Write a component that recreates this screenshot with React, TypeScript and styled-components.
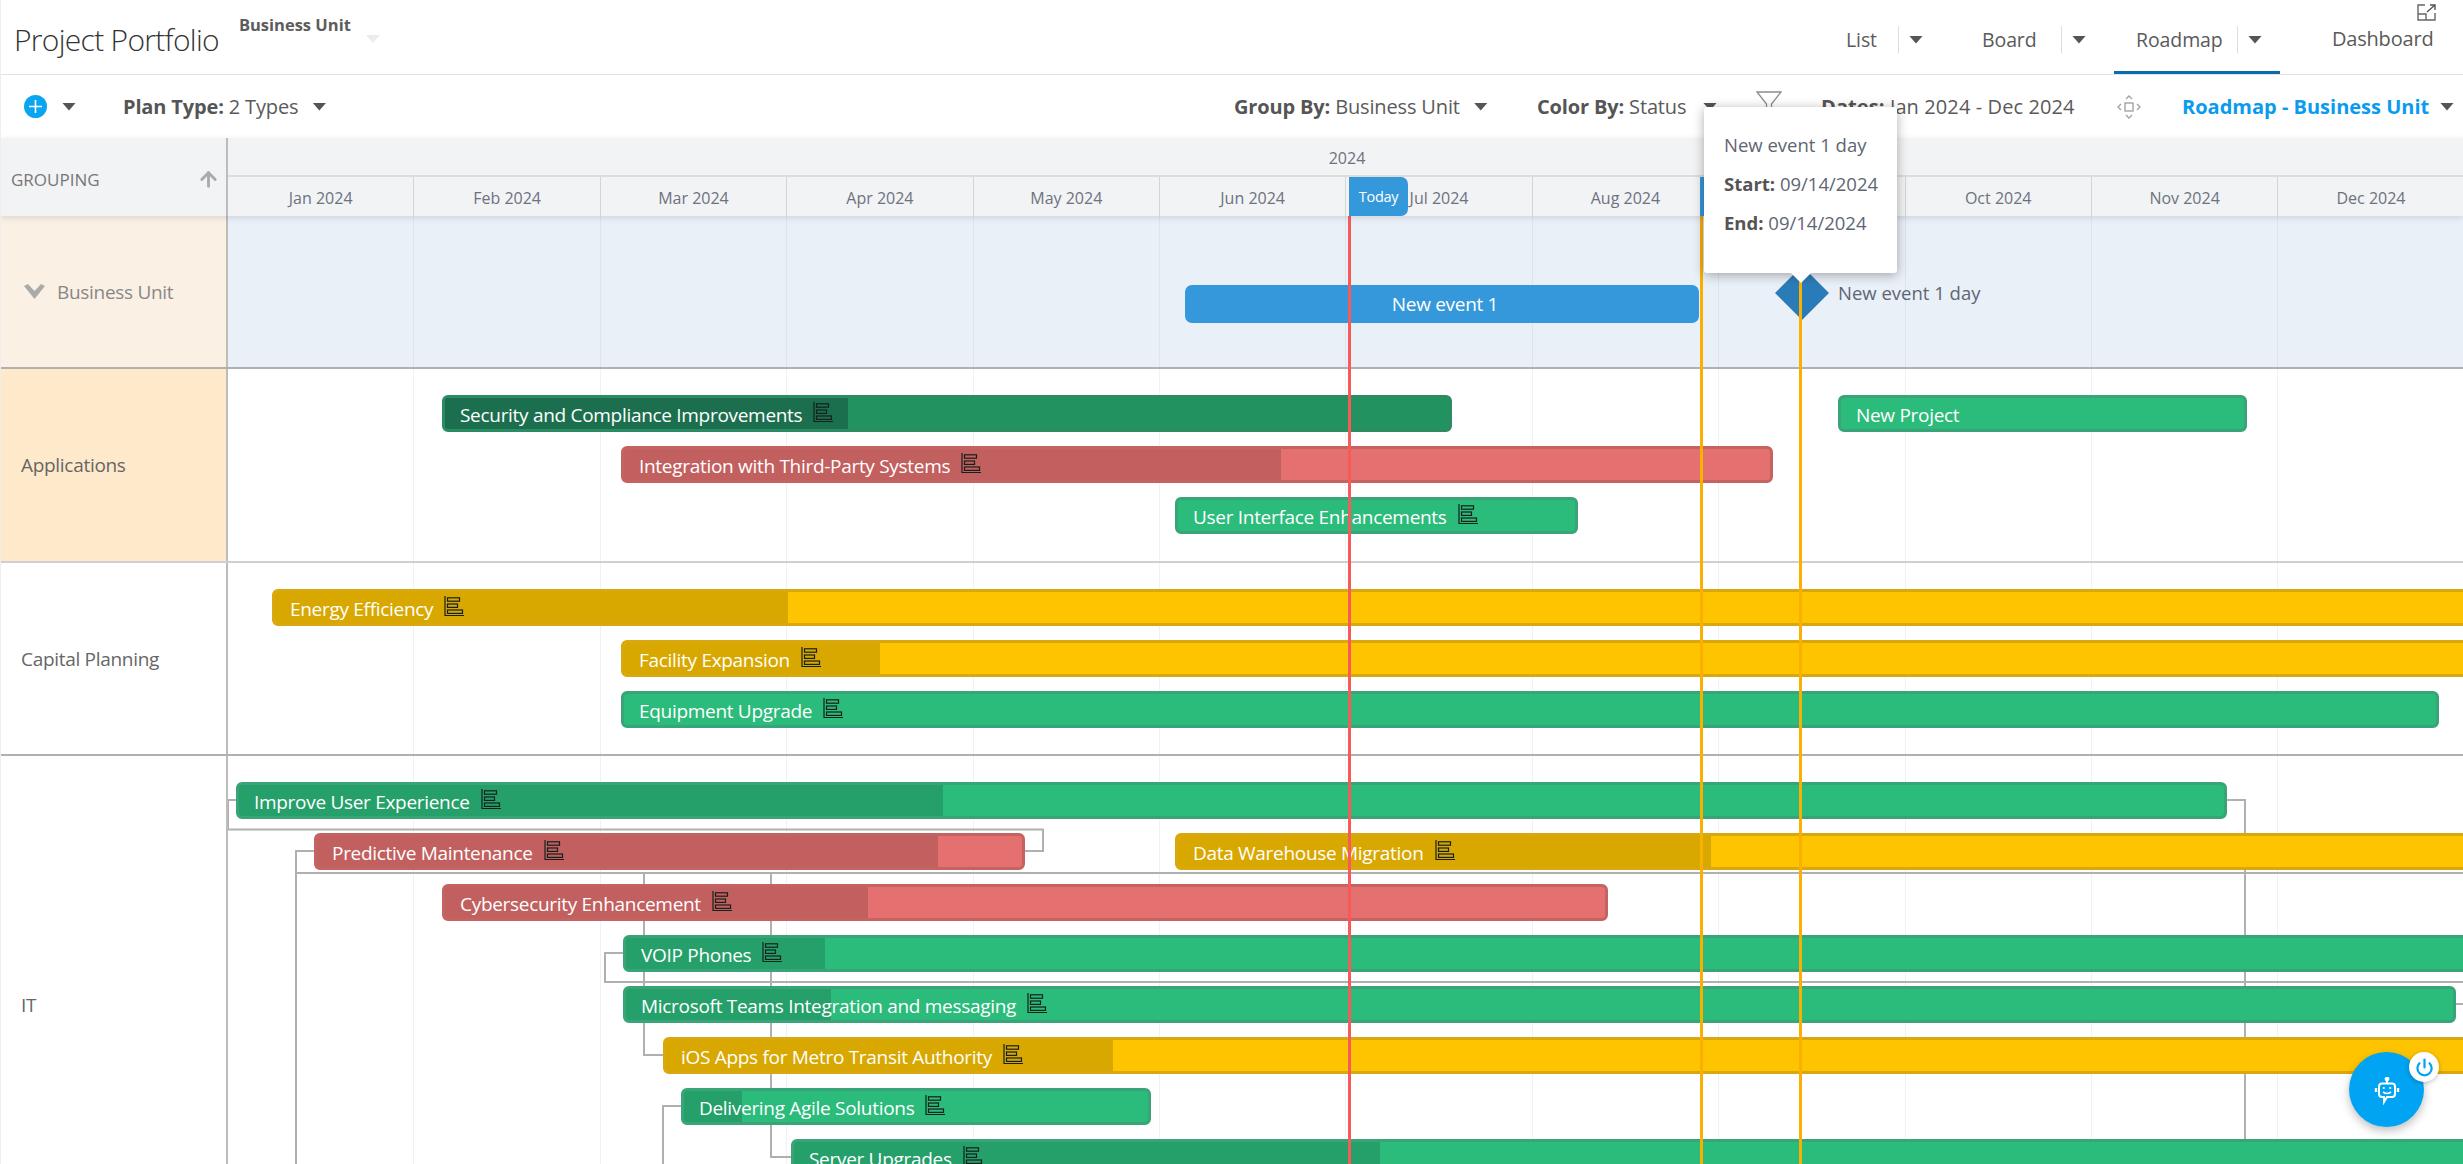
import React from "react";
import styled, { createGlobalStyle } from "styled-components";
import { ArrowUp, Power } from "lucide-react";

const GlobalStyle = createGlobalStyle`
  html, body { margin: 0; padding: 0; background: #fff; }
  body { font-family: "Open Sans", "Noto Sans", sans-serif; color: #555; letter-spacing: -0.3px; }
  * { box-sizing: border-box; }
`;

const ORIGIN = 228;
const MONTH_W = 186.4;

const Page = styled.div`
  position: relative;
  width: 2463px;
  height: 1164px;
  overflow: hidden;
  border-left: 1px solid #eee;
  display: flex;
  flex-direction: column;
`;

/* top bar */
const TopBar = styled.header`
  position: relative;
  flex: none;
  height: 75px;
  padding-right: 31px;
  border-bottom: 1px solid #e2e2e2;
  display: flex;
  align-items: stretch;
`;
const Title = styled.h1`
  margin: 20px 0 0 13px;
  font-size: 30px;
  line-height: 40px;
  font-weight: 300;
  color: #333;
  letter-spacing: -0.7px;
`;
const UnitPicker = styled.div`
  margin: 13px 0 0 20px;
  width: 140px;
  height: 36px;
  position: relative;
  font-size: 16.5px;
  line-height: 23px;
  font-weight: 700;
  color: #5c5c5c;
  letter-spacing: 0;
`;
const FaintCaret = styled.span`
  position: absolute;
  left: 127px;
  top: 22px;
  width: 14px;
  height: 8px;
  background: #ececec;
  clip-path: polygon(0 0, 100% 0, 50% 100%);
`;
const Tabs = styled.nav`
  margin-left: auto;
  display: flex;
  align-items: stretch;
`;
const Tab = styled.div<{ $ml: number; $active?: boolean }>`
  margin-left: ${(p) => p.$ml}px;
  padding: 8px 18px 0 22px;
  display: flex;
  align-items: center;
  border-bottom: 3px solid ${(p) => (p.$active ? "#0a6aab" : "transparent")};
`;
const TabLabel = styled.span<{ $w: number }>`
  width: ${(p) => p.$w}px;
  font-size: 19.5px;
  color: #5a5a5a;
  letter-spacing: -0.1px;
`;
const TabDivider = styled.span`
  width: 1px;
  height: 27px;
  background: #ddd;
  margin-right: 10px;
`;
const Caret = styled.span`
  display: inline-block;
  flex: none;
  width: 14px;
  height: 8px;
  background: #555;
  clip-path: polygon(0 0, 100% 0, 50% 100%);
`;
const PlainTab = styled.div`
  margin-left: 52px;
  width: 100px;
  font-size: 20px;
  letter-spacing: -0.2px;
  color: #5a5a5a;
  align-self: center;
  padding-top: 2px;
`;
const ExpandIcon = styled.svg`
  position: absolute;
  right: 27px;
  top: 4px;
  width: 19px;
  height: 17px;
`;

/* toolbar */
const Toolbar = styled.div`
  flex: none;
  height: 63px;
  display: flex;
  align-items: center;
  font-size: 20px;
  letter-spacing: -0.15px;
  color: #5a5a5a;
  white-space: nowrap;
`;
const PlusButton = styled.span`
  margin-left: 23px;
  width: 23px;
  height: 23px;
  border-radius: 50%;
  background: #0aa5f0;
  display: flex;
  align-items: center;
  justify-content: center;
`;
const PlusCaret = styled(Caret)`
  margin-left: 15px;
  margin-right: 47px;
`;
const ToolItem = styled.div<{ $w: number }>`
  width: ${(p) => p.$w}px;
  display: flex;
  align-items: center;
`;
const ToolCaret = styled(Caret)`
  margin-left: 14px;
`;
const ToolText = styled.span<{ $w?: number; $wide?: boolean }>`
  ${(p) => (p.$w ? `width: ${p.$w}px;` : "")}
  ${(p) => (p.$wide ? "letter-spacing: 0.1px;" : "")}
  b { font-weight: 700; color: #555; }
`;
const Spacer = styled.div`
  flex: 1;
`;
const ViewName = styled.span`
  width: 244px;
  font-weight: 700;
  color: #0a9bef;
  letter-spacing: 0;
`;
const FilterIcon = styled.svg`
  width: 26px;
  height: 26px;
  margin-top: -6px;
`;
const MoveIcon = styled.svg`
  width: 26px;
  height: 26px;
`;

/* timeline header */
const TimelineHead = styled.div`
  position: relative;
  z-index: 3;
  flex: none;
  height: 78px;
  display: flex;
  background: #f2f3f5;
  box-shadow: 0 2px 6px rgba(60, 70, 90, 0.16);
`;
const GroupCell = styled.div`
  flex: none;
  width: 227px;
  padding: 4px 6px 0 10px;
  border-right: 2px solid #bcbcbc;
  display: flex;
  align-items: center;
  justify-content: space-between;
  font-size: 17px;
  letter-spacing: 0;
  color: #777;
`;
const ScaleColumn = styled.div`
  flex: 1;
  min-width: 0;
  display: flex;
  flex-direction: column;
`;
const YearLabel = styled.div`
  height: 39px;
  border-bottom: 2px solid #dcdcdc;
  font-size: 16px;
  letter-spacing: 0;
  line-height: 40px;
  text-align: center;
  color: #6c7280;
  padding-left: 3px;
`;
const MonthRow = styled.div`
  flex: 1;
  display: flex;
`;
const MonthCell = styled.div`
  flex: none;
  width: ${MONTH_W}px;
  border-right: 1px solid #d5d5d5;
  font-size: 16px;
  letter-spacing: 0;
  line-height: 42px;
  text-align: center;
  color: #6c7280;
`;
const DateBadge = styled.div<{ $x: number; $w: number }>`
  position: absolute;
  left: ${(p) => p.$x - 1}px;
  width: ${(p) => p.$w}px;
  top: 39px;
  height: 39px;
  background: #3498db;
  border-radius: 0 7px 7px 0;
  color: #fff;
  font-size: 14.5px;
  line-height: 40px;
  text-align: center;
`;

/* rows */
const Rows = styled.div`
  position: relative;
  flex: 1;
  min-height: 0;
  display: flex;
  flex-direction: column;
`;
const Row = styled.section<{ $h: number; $line?: string }>`
  display: flex;
  flex: none;
  height: ${(p) => p.$h}px;
  ${(p) => (p.$line ? `border-bottom: 2px solid ${p.$line};` : "")}
`;
const RowLabel = styled.div<{ $bg?: string }>`
  flex: none;
  width: 227px;
  padding-left: 20px;
  background: ${(p) => p.$bg ?? "#fff"};
  border-right: 2px solid #bcbcbc;
  display: flex;
  align-items: center;
  font-size: 19px;
  color: #666;
`;
const GroupHeadLabel = styled(RowLabel)`
  padding-left: 23px;
  color: #888;
  gap: 12px;
`;
const Track = styled.div<{ $bg?: string }>`
  position: relative;
  flex: 1;
  min-width: 0;
  overflow: hidden;
  background-color: ${(p) => p.$bg ?? "#fff"};
  background-image: repeating-linear-gradient(
    to right,
    transparent 0,
    transparent ${MONTH_W - 1}px,
    rgba(120, 130, 140, 0.11) ${MONTH_W - 1}px,
    rgba(120, 130, 140, 0.11) ${MONTH_W}px
  );
`;
const LaneTrack = styled(Track)`
  display: grid;
  grid-template-columns: 100%;
  grid-auto-rows: 37px;
  row-gap: 14px;
  align-content: start;
  padding-top: 26px;
`;
const SummaryTrack = styled(Track)`
  display: flex;
  align-items: flex-start;
  padding-top: 69px;
`;
const EventBar = styled.div`
  flex: none;
  height: 38px;
  background: #3498db;
  border-radius: 7px;
  color: #fff;
  font-size: 19px;
  line-height: 39px;
  text-align: center;
  padding-left: 6px;
`;
const Diamond = styled.div`
  flex: none;
  width: 54px;
  height: 54px;
  margin: -19px 0 0 76px;
  background: #2a7cb8;
  clip-path: polygon(50% 0, 100% 50%, 50% 100%, 0 50%);
`;
const EventLabel = styled.div`
  margin: -6px 0 0 9px;
  font-size: 18.5px;
  letter-spacing: 0;
  line-height: 28px;
  color: #5e6673;
`;

const palette = {
  green: { fill: "#2bbb7b", edge: "#38a478", done: "#26a06b" },
  deep: { fill: "#229260", edge: "#2b8b63", done: "#1c6f4e" },
  red: { fill: "#e57070", edge: "#c56262", done: "#c25f5f" },
  amber: { fill: "#ffc400", edge: "#d9a70e", done: "#d8a800" },
};
type Tone = keyof typeof palette;

const Bar = styled.div<{ $tone: Tone; $lane: number }>`
  position: relative;
  z-index: 1;
  grid-column: 1;
  grid-row: ${(p) => p.$lane};
  height: 37px;
  border: 3px solid ${(p) => palette[p.$tone].edge};
  border-radius: 6px;
  background: ${(p) => palette[p.$tone].fill};
  display: flex;
  align-items: center;
  gap: 11px;
  padding: 2px 0 0 15px;
  color: #fff;
  font-size: 19px;
  white-space: nowrap;
  overflow: hidden;
`;
const BarDone = styled.div<{ $tone: Tone }>`
  position: absolute;
  left: 0;
  top: 0;
  bottom: 0;
  background: ${(p) => palette[p.$tone].done};
`;
const BarText = styled.span`
  position: relative;
`;
const PlanIcon = styled.svg`
  position: relative;
  flex: none;
  width: 21px;
  height: 21px;
  margin-top: -4px;
`;
const Links = styled.svg`
  position: absolute;
  left: 0;
  top: 0;
  width: 100%;
  height: 100%;
`;
const Marker = styled.div<{ $color: string }>`
  position: absolute;
  z-index: 2;
  top: 0;
  bottom: 0;
  width: 3px;
  background: ${(p) => p.$color};
`;

/* tooltip */
const Tip = styled.div`
  position: absolute;
  z-index: 5;
  left: 1703px;
  top: 107px;
  width: 193px;
  height: 166px;
  padding: 24px 20px;
  background: #fff;
  border-radius: 3px;
  box-shadow: 0 2px 12px rgba(0, 0, 0, 0.32);
  font-size: 18.5px;
  letter-spacing: 0;
  color: #5e6673;
  &::after {
    content: "";
    position: absolute;
    left: 87px;
    top: 100%;
    border: 10px solid transparent;
    border-bottom: 0;
    border-top-color: #fff;
  }
`;
const TipLine = styled.div`
  line-height: 28px;
  margin-bottom: 11px;
  white-space: nowrap;
  b { font-weight: 700; color: #555; }
`;

/* assistant */
const Assistant = styled.div`
  position: absolute;
  z-index: 6;
  left: 2348px;
  top: 1052px;
  width: 75px;
  height: 75px;
  border-radius: 50%;
  background: #00a4f2;
  box-shadow: 0 4px 10px rgba(0, 0, 0, 0.25);
  display: flex;
  align-items: center;
  justify-content: center;
`;
const PowerBadge = styled.div`
  position: absolute;
  left: 60px;
  top: 0;
  width: 30px;
  height: 30px;
  border-radius: 50%;
  background: #fff;
  box-shadow: 0 1px 5px rgba(0, 0, 0, 0.25);
  color: #00a4f2;
  display: flex;
  align-items: center;
  justify-content: center;
`;
const RobotIcon = styled.svg`
  width: 26px;
  height: 28px;
  margin-top: 2px;
`;

const months = ["Jan", "Feb", "Mar", "Apr", "May", "Jun", "Jul", "Aug", "Sep", "Oct", "Nov", "Dec"];

type Item = { name: string; tone: Tone; lane: number; x0: number; x1: number; done?: number; plan?: boolean };

const applications: Item[] = [
  { name: "Security and Compliance Improvements", tone: "deep", lane: 1, x0: 442, x1: 1452, done: 848, plan: true },
  { name: "New Project", tone: "green", lane: 1, x0: 1838, x1: 2247 },
  { name: "Integration with Third-Party Systems", tone: "red", lane: 2, x0: 621, x1: 1773, done: 1281, plan: true },
  { name: "User Interface Enhancements", tone: "green", lane: 3, x0: 1175, x1: 1578, plan: true },
];
const capital: Item[] = [
  { name: "Energy Efficiency", tone: "amber", lane: 1, x0: 272, x1: 2480, done: 788, plan: true },
  { name: "Facility Expansion", tone: "amber", lane: 2, x0: 621, x1: 2480, done: 880, plan: true },
  { name: "Equipment Upgrade", tone: "green", lane: 3, x0: 621, x1: 2439, plan: true },
];
const it: Item[] = [
  { name: "Improve User Experience", tone: "green", lane: 1, x0: 236, x1: 2227, done: 943, plan: true },
  { name: "Predictive Maintenance", tone: "red", lane: 2, x0: 314, x1: 1025, done: 938, plan: true },
  { name: "Data Warehouse Migration", tone: "amber", lane: 2, x0: 1175, x1: 2480, done: 1711, plan: true },
  { name: "Cybersecurity Enhancement", tone: "red", lane: 3, x0: 442, x1: 1608, done: 868, plan: true },
  { name: "VOIP Phones", tone: "green", lane: 4, x0: 623, x1: 2480, done: 825, plan: true },
  { name: "Microsoft Teams Integration and messaging", tone: "green", lane: 5, x0: 623, x1: 2456, done: 831, plan: true },
  { name: "iOS Apps for Metro Transit Authority", tone: "amber", lane: 6, x0: 663, x1: 2480, done: 1113, plan: true },
  { name: "Delivering Agile Solutions", tone: "green", lane: 7, x0: 681, x1: 1151, done: 742, plan: true },
  { name: "Server Upgrades", tone: "green", lane: 8, x0: 791, x1: 2480, done: 1380, plan: true },
];

const linkPaths: [number, number][][] = [
  [[1024, 851], [1043, 851], [1043, 829.5], [228, 829.5], [228, 800], [236, 800]],
  [[314, 851], [296, 851], [296, 1170]],
  [[296, 873], [2470, 873]],
  [[644, 873], [644, 1055], [663, 1055]],
  [[771, 873], [771, 1157], [791, 1157]],
  [[2226, 800], [2245, 800], [2245, 1170]],
  [[623, 953], [605, 953], [605, 982], [2470, 982]],
  [[2456, 1004], [2470, 1004]],
  [[681, 1106], [663, 1106], [663, 1170]],
];

const PlanGlyph = () => (
  <PlanIcon viewBox="0 0 21 21" fill="none" stroke="#14201c" strokeWidth="1.2">
    <path d="M1 0V19.5H20" />
    <rect x="3.5" y="1.8" width="12" height="3.4" />
    <rect x="3.5" y="8" width="10" height="3.4" />
    <rect x="3.5" y="14" width="15" height="3.4" />
  </PlanIcon>
);

const BarItem = ({ item }: { item: Item }) => (
  <Bar
    $tone={item.tone}
    $lane={item.lane}
    style={{ marginLeft: item.x0 - ORIGIN, width: item.x1 - item.x0 }}
  >
    {item.done ? <BarDone $tone={item.tone} style={{ width: item.done - item.x0 - 3 }} /> : null}
    <BarText>{item.name}</BarText>
    {item.plan ? <PlanGlyph /> : null}
  </Bar>
);

export default function App() {
  return (
    <Page>
      <GlobalStyle />
      <TopBar>
        <Title>Project Portfolio</Title>
        <UnitPicker>
          Business Unit
          <FaintCaret />
        </UnitPicker>
        <Tabs>
          <Tab $ml={0}>
            <TabLabel $w={52}>List</TabLabel>
            <TabDivider />
            <Caret />
          </Tab>
          <Tab $ml={19}>
            <TabLabel $w={79}>Board</TabLabel>
            <TabDivider />
            <Caret />
          </Tab>
          <Tab $ml={10} $active>
            <TabLabel $w={101}>Roadmap</TabLabel>
            <TabDivider />
            <Caret />
          </Tab>
          <PlainTab>Dashboard</PlainTab>
        </Tabs>
        <ExpandIcon viewBox="0 0 19 17" fill="none" stroke="#666" strokeWidth="1.4">
          <path d="M8 1H1V16H18V9" />
          <path d="M1 10H9V16" />
          <path d="M10 8L18 1M13 1H18V6" stroke="#555" />
        </ExpandIcon>
      </TopBar>

      <Toolbar>
        <PlusButton>
          <svg width="13" height="13" viewBox="0 0 13 13" stroke="#fff" strokeWidth="1.6">
            <path d="M6.5 0V13M0 6.5H13" />
          </svg>
        </PlusButton>
        <PlusCaret />
        <ToolItem $w={300}>
          <ToolText>
            <b>Plan Type:</b> 2 Types
          </ToolText>
          <ToolCaret />
        </ToolItem>
        <Spacer />
        <ToolItem $w={303}>
          <ToolText>
            <b>Group By:</b> Business Unit
          </ToolText>
          <ToolCaret />
        </ToolItem>
        <ToolItem $w={219}>
          <ToolText $w={152}>
            <b>Color By:</b> Status
          </ToolText>
          <ToolCaret />
        </ToolItem>
        <ToolItem $w={65}>
          <FilterIcon viewBox="0 0 26 26" fill="none" stroke="#8c8c8c" strokeWidth="1.3">
            <path d="M1 1H25L15.5 13V23L10.5 21V13Z" />
          </FilterIcon>
        </ToolItem>
        <ToolItem $w={295}>
          <ToolText $wide>
            <b>Dates:</b> Jan 2024 - Dec 2024
          </ToolText>
        </ToolItem>
        <ToolItem $w={66}>
          <MoveIcon viewBox="0 0 26 26" fill="none" stroke="#a3a3a3" strokeWidth="1.4">
            <rect x="9" y="9" width="8" height="8" />
            <path d="M10 5L13 2L16 5M10 21L13 24L16 21M5 10L2 13L5 16M21 10L24 13L21 16" />
          </MoveIcon>
        </ToolItem>
        <ToolItem $w={281}>
          <ViewName>Roadmap - Business Unit</ViewName>
          <ToolCaret />
        </ToolItem>
      </Toolbar>

      <TimelineHead>
        <GroupCell>
          <span>GROUPING</span>
          <ArrowUp size={23} color="#aaa" strokeWidth={3} />
        </GroupCell>
        <ScaleColumn>
          <YearLabel>2024</YearLabel>
          <MonthRow>
            {months.map((m) => (
              <MonthCell key={m}>{m} 2024</MonthCell>
            ))}
          </MonthRow>
        </ScaleColumn>
        <DateBadge $x={1349} $w={59}>Today</DateBadge>
        <DateBadge $x={1700} $w={30} />
      </TimelineHead>

      <Rows>
        <Row $h={153} $line="#b0b0b0">
          <GroupHeadLabel $bg="#faf1e4">
            <svg width="21" height="15" viewBox="0 0 21 15" fill="#aaa">
              <path d="M0 2L4 0L10.5 7L17 0L21 2L10.5 15Z" />
            </svg>
            <span>Business Unit</span>
          </GroupHeadLabel>
          <SummaryTrack $bg="#eaf0f7">
            <EventBar style={{ marginLeft: 1185 - ORIGIN, width: 1699 - 1185 }}>New event 1</EventBar>
            <Diamond />
            <EventLabel>New event 1 day</EventLabel>
          </SummaryTrack>
        </Row>
        <Row $h={194} $line="#cfcfcf">
          <RowLabel $bg="#ffe9cb">Applications</RowLabel>
          <LaneTrack>
            {applications.map((b) => (
              <BarItem key={b.name} item={b} />
            ))}
          </LaneTrack>
        </Row>
        <Row $h={193} $line="#b0b0b0">
          <RowLabel>Capital Planning</RowLabel>
          <LaneTrack>
            {capital.map((b) => (
              <BarItem key={b.name} item={b} />
            ))}
          </LaneTrack>
        </Row>
        <Row $h={498}>
          <RowLabel>IT</RowLabel>
          <LaneTrack>
            <Links>
              {linkPaths.map((pts, i) => (
                <polyline
                  key={i}
                  points={pts.map(([x, y]) => `${x - ORIGIN},${y - 756}`).join(" ")}
                  fill="none"
                  stroke="#b0b0b0"
                  strokeWidth="2"
                />
              ))}
            </Links>
            {it.map((b) => (
              <BarItem key={b.name} item={b} />
            ))}
          </LaneTrack>
        </Row>
        <Marker $color="#f85a5a" style={{ left: 1348 - 1 }} />
        <Marker $color="#f9b000" style={{ left: 1700 - 1 }} />
        <Marker $color="#f9b000" style={{ left: 1799 - 1 }} />
      </Rows>

      <Tip>
        <TipLine>New event 1 day</TipLine>
        <TipLine>
          <b>Start:</b> 09/14/2024
        </TipLine>
        <TipLine>
          <b>End:</b> 09/14/2024
        </TipLine>
      </Tip>

      <Assistant>
        <RobotIcon viewBox="0 0 26 28" fill="none" stroke="#fff" strokeWidth="2">
          <path d="M13 1V6" />
          <circle cx="13" cy="2" r="1.4" fill="#fff" />
          <path d="M8 6.5H18Q21 6.5 21 9.5V17Q21 20 18 20H13L10 25V20H8Q5 20 5 17V9.5Q5 6.5 8 6.5Z" />
          <path d="M2 11V15M24 11V15" strokeWidth="2.4" />
          <circle cx="9.8" cy="11" r="1.1" fill="#fff" stroke="none" />
          <circle cx="16.2" cy="11" r="1.1" fill="#fff" stroke="none" />
          <path d="M9 15Q13 18 17 15" strokeWidth="1.6" />
        </RobotIcon>
        <PowerBadge>
          <Power size={19} strokeWidth={2.8} />
        </PowerBadge>
      </Assistant>
    </Page>
  );
}
